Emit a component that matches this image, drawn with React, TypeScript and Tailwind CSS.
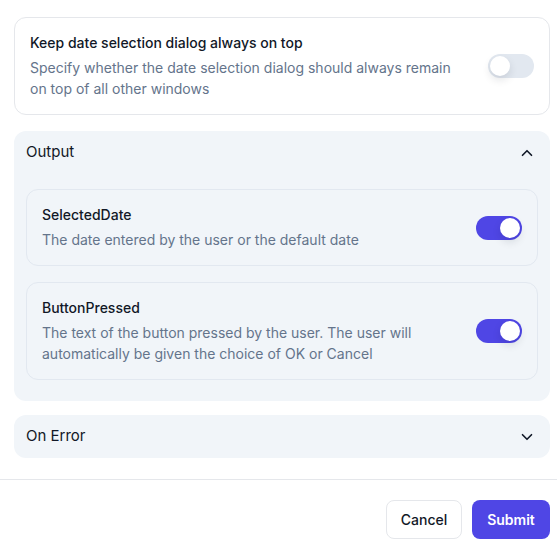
import { ChevronDown, ChevronUp } from "lucide-react";

function Toggle({ on }: { on: boolean }) {
  return (
    <div
      className={`relative h-6 w-[46px] shrink-0 rounded-full ${
        on ? "bg-[#4f46e5]" : "bg-[#e2e8f0]"
      }`}
    >
      <div
        className={`absolute top-[2px] h-5 w-5 rounded-full bg-white shadow-[0_4px_8px_rgba(15,23,42,0.12)] ${
          on ? "left-[24px]" : "left-[2px]"
        }`}
      />
    </div>
  );
}

function SettingCard({
  title,
  description,
  on,
  inner = false,
}: {
  title: string;
  description: string;
  on: boolean;
  inner?: boolean;
}) {
  return (
    <div
      className={`flex items-center gap-6 rounded-xl border p-[15px] ${
        inner ? "border-[#e2e8f0] bg-[#f1f5f9]" : "border-[#e5e7eb] bg-white"
      }`}
    >
      <div className="min-w-0 flex-1">
        <div className="text-sm leading-5 font-medium text-[#111827]">{title}</div>
        <div className="mt-1 text-sm leading-[21px] text-[#64748b]">{description}</div>
      </div>
      <Toggle on={on} />
    </div>
  );
}

export default function App() {
  return (
    <div className="h-[541px] w-[557px] overflow-hidden bg-white font-['Inter',sans-serif]">
      <div className="pt-[17px] pr-[7px] pl-[14px]">
        <SettingCard
          title="Keep date selection dialog always on top"
          description="Specify whether the date selection dialog should always remain on top of all other windows"
          on={false}
        />

        {/* Output section */}
        <div className="mt-4 rounded-xl bg-[#f1f5f9]">
          <div className="flex h-[43px] items-center justify-between pr-[14px] pl-3">
            <span className="text-[15px] text-[#111827]">Output</span>
            <ChevronUp size={18} strokeWidth={2.2} className="text-[#111827]" />
          </div>
          <div className="flex flex-col gap-4 px-3 pt-[15px] pb-[21px]">
            <SettingCard
              inner
              title="SelectedDate"
              description="The date entered by the user or the default date"
              on
            />
            <SettingCard
              inner
              title="ButtonPressed"
              description="The text of the button pressed by the user. The user will automatically be given the choice of OK or Cancel"
              on
            />
          </div>
        </div>

        <div className="mt-[14px] flex h-[43px] items-center justify-between rounded-xl bg-[#f1f5f9] pr-[14px] pl-3">
          <span className="text-[15px] text-[#111827]">On Error</span>
          <ChevronDown size={18} strokeWidth={2.2} className="text-[#111827]" />
        </div>
      </div>

      <div className="mt-[21px] border-t border-[#e5e7eb] px-[7px] pt-5">
        <div className="flex justify-end gap-[10px]">
          <button className="h-[39px] w-[76px] rounded-lg border border-[#e5e7eb] bg-white text-sm font-medium text-[#111827]">
            Cancel
          </button>
          <button className="h-[39px] w-[78px] rounded-lg bg-[#4f46e5] text-sm font-semibold text-white">
            Submit
          </button>
        </div>
      </div>
    </div>
  );
}
